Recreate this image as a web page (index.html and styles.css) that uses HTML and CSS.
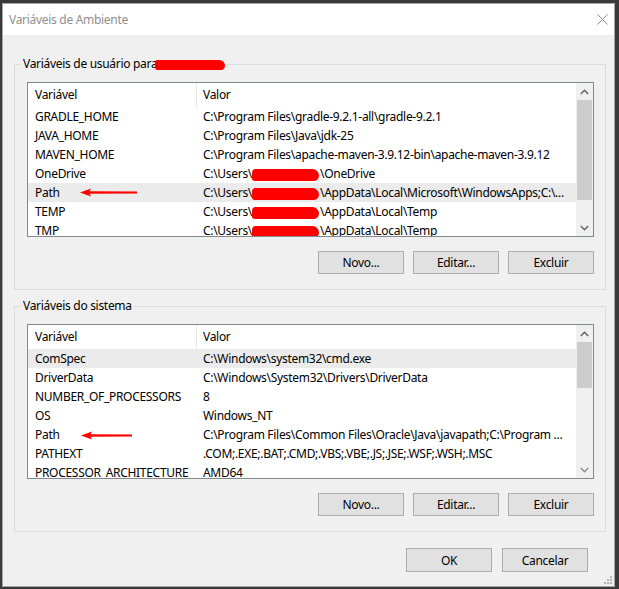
FILE: index.html
```html
<!DOCTYPE html>
<html lang="pt-BR">
<head>
<meta charset="utf-8">
<title>Variáveis de Ambiente</title>
<link rel="stylesheet" href="styles.css">
</head>
<body>
<div class="window">
  <div class="titlebar">
    <span class="title">Variáveis de Ambiente</span>
    <svg class="close" width="11" height="11" viewBox="0 0 11 11"><path d="M0.5 0.5 L10.5 10.5 M10.5 0.5 L0.5 10.5" stroke="#8c8c8c" stroke-width="1" fill="none"/></svg>
  </div>
  <div class="content">
    <fieldset class="group">
      <legend>Variáveis de usuário para<span class="redact redact-legend"></span></legend>
      <div class="list">
        <div class="list-main">
          <div class="row head"><div class="c1">Variável</div><div class="c2">Valor</div></div>
          <div class="row"><div class="c1">GRADLE_HOME</div><div class="c2">C:\Program Files\gradle-9.2.1-all\gradle-9.2.1</div></div>
          <div class="row"><div class="c1">JAVA_HOME</div><div class="c2">C:\Program Files\Java\jdk-25</div></div>
          <div class="row"><div class="c1">MAVEN_HOME</div><div class="c2">C:\Program Files\apache-maven-3.9.12-bin\apache-maven-3.9.12</div></div>
          <div class="row"><div class="c1">OneDrive</div><div class="c2">C:\Users\<span class="redact redact-user"></span>\OneDrive</div></div>
          <div class="row sel"><div class="c1">Path<svg class="arrow" width="58" height="9" viewBox="0 0 58 9"><path d="M0 4.5 L11 0.5 L9.5 3.3 L57 3.6 L57 5.4 L9.5 5.7 L11 8.5 Z" fill="#f00"/></svg></div><div class="c2">C:\Users\<span class="redact redact-user"></span>\AppData\Local\Microsoft\WindowsApps;C:\...</div></div>
          <div class="row"><div class="c1">TEMP</div><div class="c2">C:\Users\<span class="redact redact-user"></span>\AppData\Local\Temp</div></div>
          <div class="row"><div class="c1">TMP</div><div class="c2">C:\Users\<span class="redact redact-user"></span>\AppData\Local\Temp</div></div>
        </div>
        <div class="scrollbar">
          <div class="sb-btn"><svg width="9" height="6" viewBox="0 0 9 6"><polyline points="0.8,5 4.5,1.3 8.2,5" fill="none" stroke="#606060" stroke-width="1.4"/></svg></div>
          <div class="sb-track"><div class="sb-thumb thumb-user"></div></div>
          <div class="sb-btn"><svg width="9" height="6" viewBox="0 0 9 6"><polyline points="0.8,1 4.5,4.7 8.2,1" fill="none" stroke="#606060" stroke-width="1.4"/></svg></div>
        </div>
      </div>
      <div class="buttons">
        <button class="btn">Novo...</button>
        <button class="btn">Editar...</button>
        <button class="btn">Excluir</button>
      </div>
    </fieldset>

    <fieldset class="group group-sys">
      <legend>Variáveis do sistema</legend>
      <div class="list">
        <div class="list-main">
          <div class="row head"><div class="c1">Variável</div><div class="c2">Valor</div></div>
          <div class="row sel"><div class="c1">ComSpec</div><div class="c2">C:\Windows\system32\cmd.exe</div></div>
          <div class="row"><div class="c1">DriverData</div><div class="c2">C:\Windows\System32\Drivers\DriverData</div></div>
          <div class="row"><div class="c1">NUMBER_OF_PROCESSORS</div><div class="c2">8</div></div>
          <div class="row"><div class="c1">OS</div><div class="c2">Windows_NT</div></div>
          <div class="row"><div class="c1">Path<svg class="arrow arrow-sys" width="52" height="9" viewBox="0 0 52 9"><path d="M0 4.5 L11 0.5 L9.5 3.3 L51 3.6 L51 5.4 L9.5 5.7 L11 8.5 Z" fill="#f00"/></svg></div><div class="c2">C:\Program Files\Common Files\Oracle\Java\javapath;C:\Program ...</div></div>
          <div class="row"><div class="c1">PATHEXT</div><div class="c2">.COM;.EXE;.BAT;.CMD;.VBS;.VBE;.JS;.JSE;.WSF;.WSH;.MSC</div></div>
          <div class="row"><div class="c1">PROCESSOR_ARCHITECTURE</div><div class="c2">AMD64</div></div>
        </div>
        <div class="scrollbar">
          <div class="sb-btn"><svg width="9" height="6" viewBox="0 0 9 6"><polyline points="0.8,5 4.5,1.3 8.2,5" fill="none" stroke="#606060" stroke-width="1.4"/></svg></div>
          <div class="sb-track"><div class="sb-thumb thumb-sys"></div></div>
          <div class="sb-btn"><svg width="9" height="6" viewBox="0 0 9 6"><polyline points="0.8,1 4.5,4.7 8.2,1" fill="none" stroke="#8a8a8a" stroke-width="1.4"/></svg></div>
        </div>
      </div>
      <div class="buttons">
        <button class="btn">Novo...</button>
        <button class="btn">Editar...</button>
        <button class="btn">Excluir</button>
      </div>
    </fieldset>

    <div class="dialog-buttons">
      <button class="btn">OK</button>
      <button class="btn">Cancelar</button>
    </div>
  </div>
  <svg class="grip" width="8" height="8" viewBox="0 0 8 8"><g fill="#b5b5b5"><rect x="6" y="0" width="2" height="2"/><rect x="3" y="3" width="2" height="2"/><rect x="6" y="3" width="2" height="2"/><rect x="0" y="6" width="2" height="2"/><rect x="3" y="6" width="2" height="2"/><rect x="6" y="6" width="2" height="2"/></g></svg>
</div>
</body>
</html>
```

FILE: styles.css
```css
html, body {
  margin: 0;
  padding: 0;
}

body {
  background: #3a3a3a;
  font-family: "Noto Sans", "Open Sans", sans-serif;
  font-size: 12px;
  letter-spacing: -0.3px;
  color: #000;
}

.window {
  position: relative;
  margin: 3px 0 0 2px;
  width: 613px;
  height: 584px;
  box-sizing: border-box;
  border: 1px solid #a5a5a5;
  background: #f0f0f0;
  display: flex;
  flex-direction: column;
}

.titlebar {
  height: 31px;
  flex: none;
  background: #fff;
  display: flex;
  align-items: center;
  padding-left: 6px;
}

.title {
  color: #8f8f8f;
}

.close {
  margin-left: auto;
  margin-right: 6px;
}

.content {
  padding: 21px 8px 0 11px;
}

.group {
  margin: 0;
  padding: 10px 11px 15px 12px;
  border: 1px solid #dcdcdc;
  min-width: 0;
}

.group legend {
  padding: 0 2px;
  margin-left: -6px;
  line-height: 16px;
  height: 16px;
  white-space: nowrap;
}

.group-sys {
  margin-top: 8px;
}

.redact {
  display: inline-block;
  background: #f00;
  border-radius: 7px;
  vertical-align: middle;
}

.redact-legend {
  width: 70px;
  height: 10px;
  margin-left: -2px;
  border-radius: 3px 8px 6px 3px;
}

.redact-user {
  width: 67px;
  height: 12px;
  margin: 0 1px 0 0;
  border-radius: 4px 7px 6px 3px;
}

.list {
  height: 155px;
  box-sizing: border-box;
  border: 1px solid #828790;
  background: #fff;
  display: flex;
}

.list-main {
  flex: 1;
  min-width: 0;
  overflow: hidden;
}

.row {
  display: flex;
  height: 19px;
  line-height: 19px;
  white-space: nowrap;
}

.row.head {
  height: 24px;
  line-height: 23px;
}

.row.sel {
  background: #ebebeb;
}

.c1 {
  position: relative;
  width: 169px;
  flex: none;
  box-sizing: border-box;
  padding-left: 7px;
}

.head .c1 {
  border-right: 1px solid #e5e5e5;
}

.c2 {
  flex: 1;
  min-width: 0;
  overflow: hidden;
  padding-left: 6px;
}

.arrow {
  position: absolute;
  left: 52px;
  top: 5px;
}

.arrow-sys {
  left: 53px;
  top: 6px;
}

.scrollbar {
  width: 17px;
  flex: none;
  background: #f0f0f0;
  display: flex;
  flex-direction: column;
}

.sb-btn {
  height: 17px;
  flex: none;
  display: flex;
  align-items: center;
  justify-content: center;
}

.sb-track {
  flex: 1;
  padding: 0 1px;
}

.sb-thumb {
  background: #cdcdcd;
}

.thumb-user {
  height: 100px;
}

.thumb-sys {
  height: 46px;
}

.buttons {
  display: flex;
  justify-content: flex-end;
  gap: 9px;
  margin-top: 14px;
}

.btn {
  width: 86px;
  height: 23px;
  padding: 0;
  margin: 0;
  background: #e1e1e1;
  border: 1px solid #adadad;
  border-radius: 0;
  font-family: "Noto Sans", "Open Sans", sans-serif;
  font-size: 12px;
  letter-spacing: -0.3px;
  color: #000;
}

.dialog-buttons {
  display: flex;
  justify-content: flex-end;
  gap: 10px;
  margin: 16px 18px 0 0;
}

.dialog-buttons .btn {
  height: 24px;
}

.grip {
  position: absolute;
  right: 2px;
  bottom: 2px;
}
```
